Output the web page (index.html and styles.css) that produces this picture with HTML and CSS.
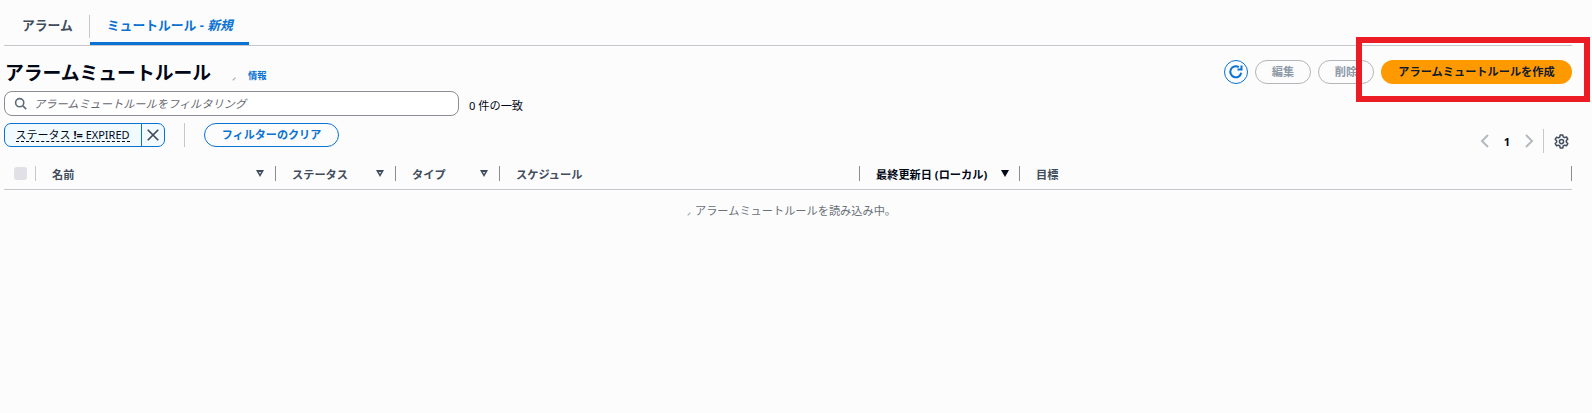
FILE: index.html
```html
<!DOCTYPE html>
<html lang="ja">
<head>
    <meta charset="UTF-8">
    <title>アラームミュートルール</title>
    <link rel="stylesheet" href="styles.css">
</head>
<body>
    <div class="page">
        <!-- タブ -->
        <nav class="tabs">
            <a class="tab">アラーム</a>
            <a class="tab tab-active">ミュートルール - <em>新規</em></a>
        </nav>

        <!-- ヘッダー -->
        <div class="head">
            <div class="title-row">
                <h1>アラームミュートルール</h1>
                <span class="spinner-mark small"></span>
                <a class="info">情報</a>
            </div>
            <div class="actions">
                <button class="icon-btn" aria-label="更新">
                    <svg width="16" height="16" viewBox="0 0 16 16" fill="none" stroke="#0972d3" stroke-width="2">
                        <path d="M13.2 8.8A5.5 5.5 0 1 1 10.8 3.2"/>
                        <path d="M13.5 1.5v4h-4" stroke-linejoin="miter"/>
                    </svg>
                </button>
                <button class="btn btn-disabled">編集</button>
                <button class="btn btn-disabled">削除</button>
                <button class="btn btn-primary">アラームミュートルールを作成</button>
            </div>
        </div>

        <!-- フィルター -->
        <div class="filter-row">
            <div class="search">
                <svg width="13" height="13" viewBox="0 0 16 16" fill="none" stroke="#5f6b7a" stroke-width="2">
                    <circle cx="7" cy="7" r="5"/>
                    <path d="M11 11l4 4"/>
                </svg>
                <span>アラームミュートルールをフィルタリング</span>
            </div>
            <span class="match-count">0 件の一致</span>
        </div>

        <div class="tools-row">
            <div class="token">
                <span class="token-label"><span class="token-text">ステータス <b>!=</b> EXPIRED</span></span>
                <span class="token-close">
                    <svg width="14" height="14" viewBox="0 0 16 16" fill="none" stroke="#414d5c" stroke-width="2">
                        <path d="M2 2l12 12M14 2L2 14"/>
                    </svg>
                </span>
            </div>
            <span class="tools-divider"></span>
            <button class="btn btn-clear">フィルターのクリア</button>
            <div class="pager">
                <svg width="10" height="14" viewBox="0 0 10 14" fill="none" stroke="#b4b9c0" stroke-width="2"><path d="M8 1L2 7l6 6"/></svg>
                <span class="page-num">1</span>
                <svg width="10" height="14" viewBox="0 0 10 14" fill="none" stroke="#b4b9c0" stroke-width="2"><path d="M2 1l6 6-6 6"/></svg>
                <span class="pager-divider"></span>
                <svg width="15" height="15" viewBox="0 0 16 16" fill="none" stroke="#414d5c" stroke-width="1.6">
                    <path d="M6.6 1h2.8l.4 2 1.5.9 2-.7 1.4 2.4-1.5 1.4v1.8l1.5 1.4-1.4 2.4-2-.7-1.5.9-.4 2H6.6l-.4-2-1.5-.9-2 .7-1.4-2.4 1.5-1.4V7.2L1.3 5.8l1.4-2.4 2 .7 1.5-.9z" stroke-linejoin="round"/>
                    <circle cx="8" cy="8.1" r="2.2"/>
                </svg>
            </div>
        </div>

        <!-- テーブル -->
        <div class="table-head">
            <div class="col col-check"><span class="checkbox"></span></div>
            <div class="col col-name"><span>名前</span><i class="sort"></i></div>
            <div class="col col-status"><span>ステータス</span><i class="sort"></i></div>
            <div class="col col-type"><span>タイプ</span><i class="sort"></i></div>
            <div class="col col-schedule"><span>スケジュール</span></div>
            <div class="col col-updated"><span>最終更新日 (ローカル)</span><i class="sort sort-active"></i></div>
            <div class="col col-target"><span>目標</span></div>
        </div>
        <p class="loading"><span class="spinner-mark"></span>アラームミュートルールを読み込み中。</p>
    </div>

    <div class="highlight"></div>
</body>
</html>
```

FILE: styles.css
```css
/* 全体 */
body {
    margin: 0;
    height: 413px;
    overflow: hidden;
    background-color: #fcfcfc;
    color: #000716;
    font-family: "Noto Sans", "Noto Sans CJK JP", sans-serif;
    font-size: 11.2px;
}

.page {
    width: 1568px;
    padding-left: 4px;
}

button {
    font-family: inherit;
}

/* タブ */
.tabs {
    display: flex;
    height: 46px;
    box-sizing: border-box;
    padding-top: 15px;
    border-bottom: 1px solid #c6c6cd;
}

.tab {
    font-size: 12.8px;
    font-weight: 700;
    line-height: 21px;
    color: #414d5c;
    white-space: nowrap;
}

.tab:first-child {
    padding: 0 16px 0 18px;
    border-right: 1px solid #c6c6cd;
    height: 23px;
}

.tab-active {
    padding-left: 17px;
    color: #0972d3;
    border-bottom: 3px solid #0972d3;
    box-sizing: border-box;
    height: 30px;
    width: 159px;
}

.tab-active em {
    font-style: italic;
}

/* ヘッダー */
.head {
    display: flex;
    justify-content: space-between;
    height: 45px;
    padding-top: 14px;
    box-sizing: border-box;
}

.title-row {
    display: flex;
    align-items: center;
    height: 26px;
    padding-left: 1px;
}

h1 {
    margin: 0;
    font-size: 18.8px;
    line-height: 26px;
    font-weight: 700;
}

.info {
    margin-left: 13px;
    margin-top: 4px;
    font-size: 9.3px;
    font-weight: 700;
    color: #0972d3;
}

.spinner-mark {
    display: inline-block;
    width: 4px;
    height: 3px;
    border-bottom: 1px solid #9ba7b6;
    transform: rotate(-45deg);
}

.spinner-mark.small {
    margin: 10px 0 0 20px;
}

.actions {
    display: flex;
    align-items: flex-start;
    gap: 7px;
    height: 24px;
}

.icon-btn {
    display: flex;
    align-items: center;
    justify-content: center;
    width: 24px;
    height: 24px;
    padding: 0;
    background: none;
    border: 1px solid #0972d3;
    border-radius: 50%;
}

.btn {
    height: 24px;
    padding: 0 16px;
    border-radius: 12px;
    font-size: 11.2px;
    font-weight: 700;
    line-height: 20px;
    background: none;
}

.btn-disabled {
    width: 56px;
    padding: 0;
    color: #8d99a8;
    border: 1px solid #b4b4bb;
}

.btn-primary {
    width: 191px;
    padding: 0;
    color: #0f1b2a;
    background-color: #ff9900;
    border: none;
}

/* フィルター */
.filter-row {
    display: flex;
    align-items: center;
    height: 25px;
}

.search {
    display: flex;
    align-items: center;
    gap: 7px;
    width: 455px;
    height: 25px;
    padding: 0 0 1px 9px;
    box-sizing: border-box;
    border: 1px solid #8c8c94;
    border-radius: 8px;
    background-color: #ffffff;
    color: #656871;
    font-style: italic;
}

.match-count {
    margin-left: 10px;
    margin-top: 2px;
}

.tools-row {
    display: flex;
    align-items: center;
    height: 24px;
    margin-top: 7px;
}

.token {
    display: flex;
    width: 161px;
    height: 24px;
    box-sizing: border-box;
    border: 1px solid #0972d3;
    border-radius: 7px;
    background-color: #f1faff;
}

.token-label {
    display: flex;
    align-items: center;
    width: 137px;
    padding-left: 10.5px;
    box-sizing: border-box;
    border-right: 1px solid #0972d3;
    font-size: 11px;
}

.token-text {
    border-bottom: 1px dashed #000716;
    line-height: 13px;
    white-space: nowrap;
}

.token-close {
    display: flex;
    align-items: center;
    justify-content: center;
    flex: 1;
}

.tools-divider {
    width: 1px;
    height: 24px;
    margin: 0 19px;
    background-color: #c6c6cd;
}

.btn-clear {
    width: 135px;
    padding: 0;
    font-size: 11.1px;
    color: #0972d3;
    border: 1px solid #0972d3;
}

.pager {
    display: flex;
    align-items: center;
    height: 24px;
    margin-left: auto;
    margin-top: 12px;
    padding-right: 3px;
}

.page-num {
    width: 34px;
    text-align: center;
    font-weight: 700;
}

.pager-divider {
    width: 1px;
    height: 24px;
    margin: 0 10px 0 9px;
    background-color: #c6c6cd;
}

/* テーブル */
.table-head {
    display: flex;
    align-items: flex-start;
    height: 24px;
    margin-top: 19px;
    box-sizing: border-box;
    border-bottom: 1px solid #c6c6cd;
    color: #414d5c;
    font-weight: 700;
}

.col {
    display: flex;
    align-items: center;
    justify-content: space-between;
    height: 15px;
    box-sizing: border-box;
    border-right: 1px solid #8c8c94;
}

.col-check {
    width: 32px;
    padding-left: 10px;
    border-right-color: #c6c6cd;
}

.checkbox {
    width: 13px;
    height: 13px;
    border-radius: 3px;
    background-color: #e0e0e6;
}

.col-name {
    width: 240px;
    padding: 0 11px 0 16px;
}

.col-status {
    width: 120px;
    padding: 0 11px 0 16px;
}

.col-type {
    width: 104px;
    padding: 0 11px 0 16px;
}

.col-schedule {
    width: 360px;
    padding-left: 16px;
}

.col-updated {
    width: 160px;
    padding: 0 10px 0 16px;
    color: #000716;
}

.col-target {
    flex: 1;
    padding-left: 16px;
}

.sort {
    display: block;
    width: 0;
    height: 0;
    border-left: 4px solid transparent;
    border-right: 4px solid transparent;
    border-top: 7px solid #414d5c;
    position: relative;
}

.sort::after {
    content: "";
    position: absolute;
    left: -1.5px;
    top: -5.5px;
    border-left: 1.5px solid transparent;
    border-right: 1.5px solid transparent;
    border-top: 2px solid #fcfcfc;
}

.sort-active::after {
    display: none;
}

.sort-active {
    border-top-color: #000716;
}

.loading {
    margin: 12px 0 0;
    padding-left: 6px;
    text-align: center;
    color: #687078;
}

.loading .spinner-mark {
    margin-right: 5px;
}

/* 赤枠 */
.highlight {
    position: absolute;
    left: 1356px;
    top: 37px;
    width: 234px;
    height: 65px;
    box-sizing: border-box;
    border: 6px solid #ec1c24;
}
```
